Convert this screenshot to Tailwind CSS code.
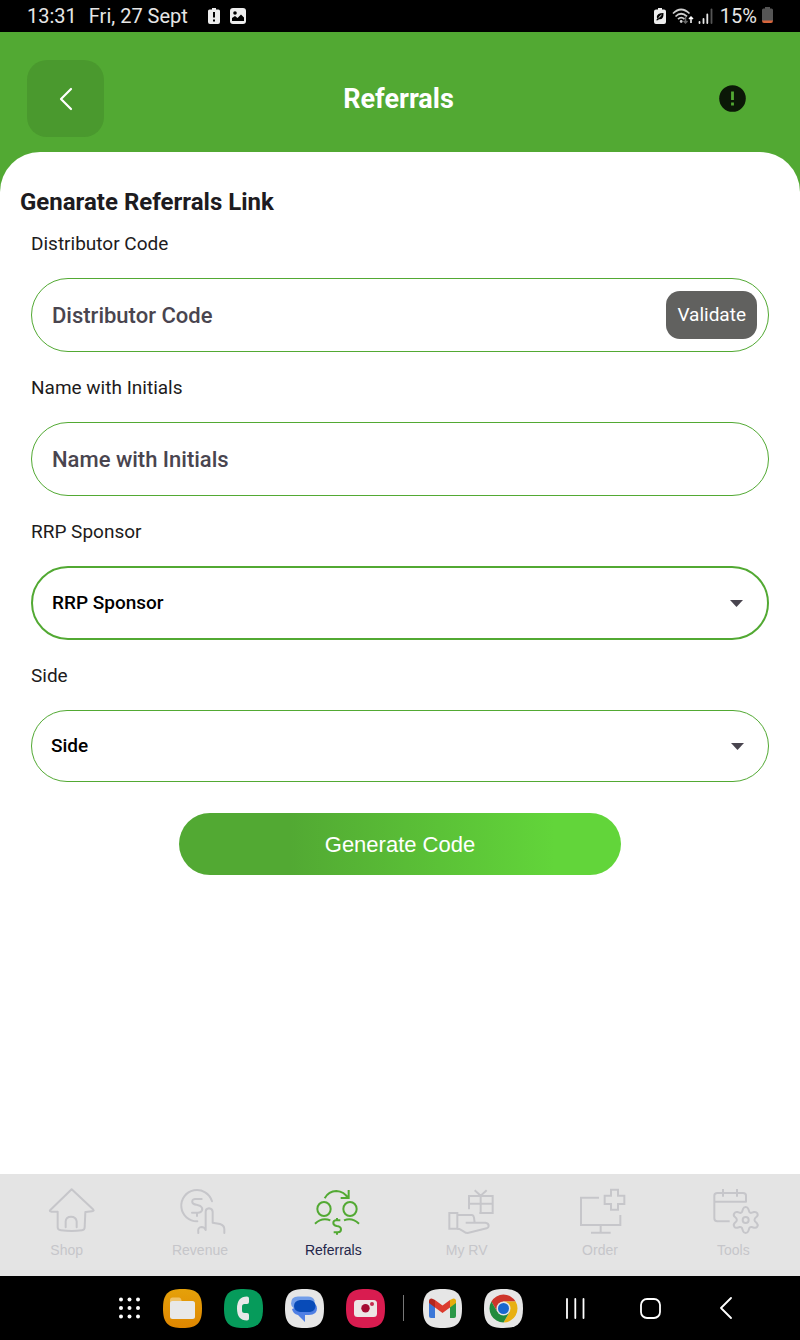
<!DOCTYPE html>
<html lang="en">
<head>
<meta charset="utf-8">
<meta name="viewport" content="width=device-width, initial-scale=1">
<title>Referrals</title>
<script src="https://cdn.jsdelivr.net/npm/@tailwindcss/browser@4"></script>
</head>
<body class="flex min-h-screen flex-col bg-[#52a933] font-['Roboto',sans-serif] text-[#1d1b20]">

<!-- Device status bar -->
<div class="flex h-8 items-center justify-between bg-black px-[27px] text-xl text-[#e6e6e6]">
  <div class="flex items-center">
    <span>13:31</span>
    <span class="ml-3">Fri, 27 Sept</span>
    <svg class="ml-5 h-[18px] w-3" viewBox="0 0 12 18" fill="none"><path d="M4 1h4v1.500h2.500Q12 2.500 12 4v11q0 2-2 2H2q-2 0-2-2V4q0-1.500 1.500-1.500H4z" fill="#ededed"/><path d="M6 5v5.500M6 12.500v2" stroke="#000" stroke-width="2"/></svg>
    <svg class="ml-[10px] h-4 w-4" viewBox="0 0 16 16"><rect width="16" height="16" rx="3" fill="#ededed"/><path d="M2 13V10l3-2 2.500 2L11 6.500 14 9.500V13z" fill="#000"/><circle cx="5" cy="5" r="1.800" fill="#000"/></svg>
  </div>
  <div class="flex items-center">
    <svg class="h-[18px] w-3" viewBox="0 0 12 18"><path d="M4 1h4v1.500h2Q12 2.500 12 4.500V15q0 2-2 2H2q-2 0-2-2V4.500Q0 2.500 2 2.500h2z" fill="#ededed"/><path d="M9.500 6Q3 6 2.800 9.800q0 1 .7 1.600L2 13.200h2l.8-1Q9.800 13 9.500 6z" fill="#000"/><path d="M4.500 10.800 7.500 8" stroke="#ededed"/></svg>
    <svg class="ml-[6px] h-[18px] w-[22px]" viewBox="0 0 22 18" fill="none" stroke="#cfcfcf" stroke-width="1.700"><path d="M1 6.500Q9 -1.500 17.500 6.500M3.500 9.500q5.500-5.500 11.500 0M6 12.200q3.200-3 6.500 0"/><circle cx="9.200" cy="14.500" r="1.400" fill="#cfcfcf" stroke="none"/><path d="M13.500 9v7M11.500 14l2 2 2-2" stroke="#666" stroke-width="1.500"/><path d="M19 16V10.500M17 12l2-2 2 2" stroke="#fff" stroke-width="1.500"/></svg>
    <svg class="ml-1 h-4 w-[15px]" viewBox="0 0 15 16" stroke-width="1.800" stroke-linecap="round"><path d="M1.500 14v1M5.500 11v4M9.300 6.500V15" stroke="#e6e6e6"/><path d="M13.500 1.500V15" stroke="#555"/></svg>
    <span class="ml-[7px]">15%</span>
    <svg class="ml-[5px] h-[18px] w-[11px]" viewBox="0 0 11 18"><path d="M3 0h5v1.500h1.500q1.500 0 1.500 1.500V14H0V3q0-1.500 1.500-1.500H3z" fill="#555"/><path d="M0 13.500h11q0 2.500-2 2.500H2q-2 0-2-2.500z" fill="#d8653c"/></svg>
  </div>
</div>

<header class="flex h-[120px] items-center justify-between px-[27px] pt-[13px]">
  <button type="button" aria-label="Back" class="flex h-[77px] w-[77px] items-center justify-center rounded-[20px] bg-[#4a992e]">
    <svg class="h-6 w-6" viewBox="0 0 24 24" fill="none" stroke="#fff" stroke-width="2.200" stroke-linecap="round" stroke-linejoin="round"><path d="M17 2 7 12l10 10"/></svg>
  </button>
  <h1 class="text-[27px] leading-9 font-bold text-white">Referrals</h1>
  <div class="flex w-20 justify-center">
    <button type="button" aria-label="Information">
      <svg class="h-[27px] w-[27px]" viewBox="0 0 27 27"><circle cx="13.500" cy="13.500" r="13.300" fill="#0b1807"/><path d="M13.500 6.500v8.500M13.500 17.500v3" stroke="#52a933" stroke-width="2.800"/></svg>
    </button>
  </div>
</header>

<main class="flex-1 rounded-t-[40px] bg-white pt-[34px]">
  <h2 class="px-5 text-2xl leading-8 font-bold">Genarate Referrals Link</h2>
  <form class="mt-[14px] flex flex-col gap-6 px-[31px] text-[19px]">
    <div class="flex flex-col gap-[22px]">
      <label for="code" class="leading-6">Distributor Code</label>
      <div class="flex h-[74px] items-center rounded-full border border-[#52a933] pr-[11px] pl-5">
        <input id="code" type="text" placeholder="Distributor Code" class="min-w-0 flex-1 text-[22px] font-medium outline-none placeholder:text-[#49454f]">
        <button type="button" class="h-12 rounded-[14px] bg-[#61615f] px-[11px] text-white">Validate</button>
      </div>
    </div>

    <div class="flex flex-col gap-[22px]">
      <label for="name" class="leading-6">Name with Initials</label>
      <input id="name" type="text" placeholder="Name with Initials" class="h-[74px] rounded-full border border-[#52a933] px-5 text-[22px] font-medium outline-none placeholder:text-[#49454f]">
    </div>

    <div class="flex flex-col gap-[22px]">
      <label for="sponsor" class="leading-6">RRP Sponsor</label>
      <div class="relative flex">
        <select id="sponsor" class="h-[74px] w-full appearance-none rounded-full border-2 border-[#52a933] px-[19px] font-medium text-black outline-none"><option>RRP Sponsor</option></select>
        <svg class="pointer-events-none absolute inset-y-0 right-[26px] my-auto h-[7px] w-[13px]" viewBox="0 0 13 7"><path d="M0 0h13L6.500 7z" fill="#49454f"/></svg>
      </div>
    </div>

    <div class="flex flex-col gap-[22px]">
      <label for="side" class="leading-6">Side</label>
      <div class="relative flex">
        <select id="side" class="h-[72px] w-full appearance-none rounded-full border border-[#52a933] px-[19px] font-medium text-black outline-none"><option>Side</option></select>
        <svg class="pointer-events-none absolute inset-y-0 right-[25px] my-auto h-[7px] w-[13px]" viewBox="0 0 13 7"><path d="M0 0h13L6.500 7z" fill="#49454f"/></svg>
      </div>
    </div>

    <button type="button" class="mt-[7px] h-[62px] w-3/5 self-center rounded-full bg-linear-to-r/srgb from-[#52a933] from-25% to-[#62d53a] to-85% font-['Liberation_Sans',sans-serif] text-[22px] text-white">Generate Code</button>
  </form>
</main>

<nav class="grid h-[102px] grid-cols-6 bg-[#e4e4e4] pt-3 font-['Liberation_Sans',sans-serif] text-sm text-[#c6c6ca]">
  <a href="#shop" class="flex flex-col items-center gap-1">
    <svg class="h-[50px] w-14" viewBox="116 48 168 150" fill="none" stroke="currentColor" stroke-width="6" stroke-linecap="round" stroke-linejoin="round"><path d="M172 125h-18q-8-1-4-5l64-62 64 60q5 5-3 6l-19 2M172 125v47q0 8 10 9 32 4 63 0 8-1 8-9l2-46M196 172v-18q1-14 16-14t17 14v18"/></svg>
    Shop
  </a>
  <a href="#revenue" class="flex flex-col items-center gap-1">
    <svg class="h-[50px] w-14" viewBox="516 48 168 150" fill="none" stroke="currentColor" stroke-width="6" stroke-linecap="round" stroke-linejoin="round"><path d="M636 94a47 47 0 1 0-44 60"/><path d="M605 87h-20q-10 1-8 10 2 6 12 7l12 4q8 5 5 13-3 7-12 7h-18M591 128v10"/><path d="M617 180v-55q0-9 10-10 10 1 11 10v33l22 4q13 4 13 16v11M617 180q-3-9-13-9-12 1-9 18M617 180v-4"/></svg>
    Revenue
  </a>
  <a href="#referrals" aria-current="page" class="flex flex-col items-center gap-1 text-[#24264a]">
    <svg class="h-[50px] w-14" viewBox="106 48 168 150" fill="none" stroke="#52a933" stroke-width="6"><ellipse cx="163" cy="117" rx="20" ry="21"/><ellipse cx="241" cy="117" rx="20" ry="21"/><path d="M165 85q12-22 35-22 24 1 35 22M213 84h24V60M136 161q21-20 46-10M223 151q24-10 45 10M212 151h-14q-7 1-7 8t10 9q13 2 13 10 0 9-9 9h-13M202 144v7M202 187v7"/></svg>
    Referrals
  </a>
  <a href="#my-rv" class="flex flex-col items-center gap-1">
    <svg class="h-[50px] w-14" viewBox="506 48 168 150" fill="none" stroke="currentColor" stroke-width="6"><path d="M596 118V78h71v51h-40M596 101h71M631 78v51M613 61l18 16 18-16M537 129h24v47h-24zM561 135h44q5 1 6 8l2 15M586 158h59q10 1 10 10 0 5-6 7l-57 14q-6 0-11-4l-14-8h-6"/></svg>
    My RV
  </a>
  <a href="#order" class="flex flex-col items-center gap-1">
    <svg class="h-[50px] w-14" viewBox="96 48 168 150" fill="none" stroke="currentColor" stroke-width="6"><path d="M177 83h-54v82h118v-30M182 165v22M153 188h59M213 59h21v18h19v25h-19v17h-21v-17h-19V77h19z"/></svg>
    Order
  </a>
  <a href="#tools" class="flex flex-col items-center gap-1">
    <svg class="h-[50px] w-14" viewBox="496 48 168 150" fill="none" stroke="currentColor" stroke-width="6" stroke-linejoin="round"><path d="M570 154h-37q-9 0-9-9V77q0-8 9-8h77q9 0 9 8v18h-95M550 57v23M592 57v23"/><circle cx="618" cy="150" r="9"/><path d="M610 117q2-6 8-6t8 6l3 9q3 4 8 2l6-2q7-1 10 4 3 6-2 10l-5 5q-3 5 0 9l5 5q5 5 2 11-4 5-10 3l-7-2q-5-1-7 3l-3 9q-2 6-8 6t-8-6l-3-9q-2-4-7-3l-7 2q-6 2-9-3-4-6 1-11l5-5q3-4 0-9l-5-5q-5-4-1-10 3-5 9-4l6 2q5 2 8-2z"/></svg>
    Tools
  </a>
</nav>

<!-- Device task bar -->
<div class="flex h-16 items-center bg-black pl-[118px]">
  <button type="button" aria-label="All apps"><svg class="h-[22px] w-[23px]" viewBox="0 0 23 22" fill="#fff"><circle cx="3" cy="2.500" r="2"/><circle cx="11.500" cy="2.500" r="2"/><circle cx="20" cy="2.500" r="2"/><circle cx="3" cy="11" r="2"/><circle cx="11.500" cy="11" r="2"/><circle cx="20" cy="11" r="2"/><circle cx="3" cy="19.500" r="2"/><circle cx="11.500" cy="19.500" r="2"/><circle cx="20" cy="19.500" r="2"/></svg></button>
  <div class="ml-[22px] flex gap-[22px]">
    <button type="button" aria-label="My Files"><svg class="h-[39px] w-[39px]" viewBox="0 0 39 39"><defs><linearGradient id="files" x2="0" y2="1"><stop stop-color="#e5a10a"/><stop offset="1" stop-color="#df8600"/></linearGradient></defs><path d="M19.500 0C34 0 39 5 39 19.500S34 39 19.500 39 0 34 0 19.500 5 0 19.500 0z" fill="url(#files)"/><path d="M7 16v-5q0-2.500 2.500-2.500H16q2 0 2.500 3V16z" fill="#efc268"/><rect x="7" y="12" width="25" height="18" rx="2.500" fill="#e8e8e8"/></svg></button>
    <button type="button" aria-label="Phone"><svg class="h-[39px] w-[39px]" viewBox="0 0 39 39"><path d="M19.500 0C34 0 39 5 39 19.500S34 39 19.500 39 0 34 0 19.500 5 0 19.500 0z" fill="#069b5b"/><path d="M23 7.500q2 0 2 2v3.500q0 2-2 2h-2.500q-2.500 0-2.500 2.500v4q0 2.500 2.500 2.500H23q2 0 2 2v3.500q0 2-2 2-10 0-10-12t10-12z" fill="#e8e8e8"/></svg></button>
    <button type="button" aria-label="Messages"><svg class="h-[39px] w-[39px]" viewBox="0 0 39 39"><path d="M19.500 0C34 0 39 5 39 19.500S34 39 19.500 39 0 34 0 19.500 5 0 19.500 0z" fill="#e6e6e6"/><path d="M13 7.500h10q5 0 6.500 4v10H16Q6 20 6 14.500q0-7 7-7z" fill="#719de9"/><path d="M25 13q7 1 7 6.500 0 6.500-8 6.500h-4v7l-7-7q-5-1-6-6z" fill="#4f7fe4"/><path d="M15 11h10q5.500 1 5.500 6t-5.500 6H15q-6-1-6-6t6-6z" fill="#084bb8"/></svg></button>
    <button type="button" aria-label="Camera"><svg class="h-[39px] w-[39px]" viewBox="0 0 39 39"><path d="M19.500 0C34 0 39 5 39 19.500S34 39 19.500 39 0 34 0 19.500 5 0 19.500 0z" fill="#d91c50"/><rect x="8" y="11" width="23" height="17" rx="3.500" fill="#ece6e6"/><circle cx="19.500" cy="19.200" r="4.200" fill="#a50c32"/><circle cx="26" cy="15" r="2" fill="#c62c50"/></svg></button>
  </div>
  <div class="mr-[19px] ml-[18px] h-[26px] w-px bg-[#777]"></div>
  <div class="flex gap-[22px]">
    <button type="button" aria-label="Gmail"><svg class="h-[39px] w-[39px]" viewBox="0 0 39 39"><path d="M19.500 0C34 0 39 5 39 19.500S34 39 19.500 39 0 34 0 19.500 5 0 19.500 0z" fill="#e6e6e6"/><path d="M6 13l6 4.500V29H8q-2 0-2-2z" fill="#3c78d8"/><path d="M33 13l-6 4.500V29h4q2 0 2-2z" fill="#2b9847"/><path d="M12 11l7.500 5.500L27 11v7.500L19.500 24 12 18.500z" fill="#db3b2e"/><path d="M6 14v-2q0-2.500 2.500-2.500 1 0 3.500 1.500v7.500z" fill="#b3271f"/><path d="M33 14v-2q0-2.500-2.500-2.500-1 0-3.500 1.500v7.500z" fill="#e6ad0c"/></svg></button>
    <button type="button" aria-label="Chrome"><svg class="h-[39px] w-[39px]" viewBox="0 0 39 39"><path d="M19.500 0C34 0 39 5 39 19.500S34 39 19.500 39 0 34 0 19.500 5 0 19.500 0z" fill="#e6e6e6"/><path d="M7.380 12.500A14 14 0 0 1 31.620 12.500H19.500L13.440 23z" fill="#ce352b"/><path d="M31.620 12.500A14 14 0 0 1 19.500 33.500L25.560 23 19.500 12.500z" fill="#e8b012"/><path d="M19.500 33.500A14 14 0 0 1 7.380 12.500L13.440 23h12.120z" fill="#218b3d"/><circle cx="19.500" cy="19.500" r="7" fill="#e6e6e6"/><circle cx="19.500" cy="19.500" r="5.500" fill="#1968cf"/></svg></button>
  </div>
  <button type="button" aria-label="Recents" class="ml-[42px]"><svg class="h-[21px] w-5" viewBox="0 0 20 21" stroke="#fff" stroke-width="1.800" stroke-linecap="round"><path d="M2 1v19M10.300 1v19M18.500 1v19"/></svg></button>
  <button type="button" aria-label="Home" class="ml-[55px]"><svg class="h-[21px] w-[21px]" viewBox="0 0 21 21" fill="none" stroke="#fff" stroke-width="1.800"><rect x="1" y="1" width="19" height="19" rx="6"/></svg></button>
  <button type="button" aria-label="Back to previous screen" class="ml-[58px]"><svg class="h-[22px] w-[14px]" viewBox="0 0 14 22" fill="none" stroke="#fff" stroke-width="1.800" stroke-linecap="round" stroke-linejoin="round"><path d="M12 1 2 11l10 10"/></svg></button>
</div>
</body>
</html>
